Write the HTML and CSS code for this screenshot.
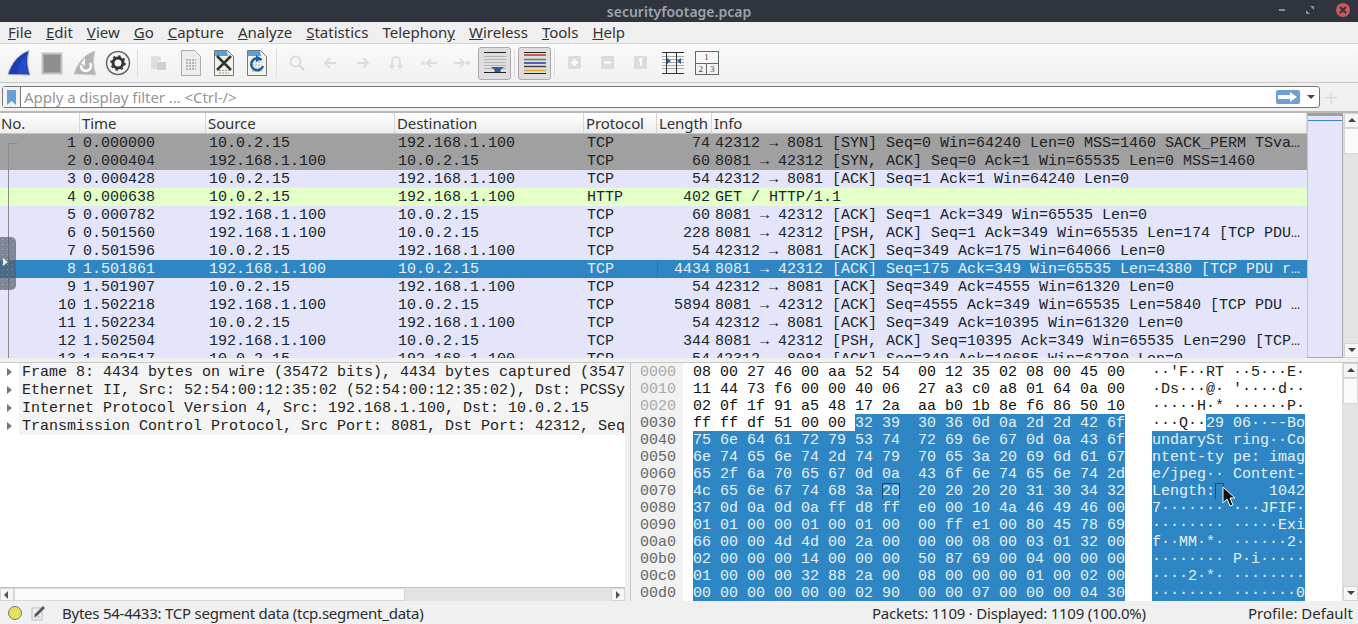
FILE: index.html
```html
<!DOCTYPE html>
<html lang="en">

<head>
    <meta charset="UTF-8">
    <title>securityfootage.pcap</title>
    <link rel="stylesheet" href="styles.css">
</head>

<body>
    <div class="window">
        <div class="titlebar">
            <span class="title">securityfootage.pcap</span>
            <div class="win-buttons">
                <span class="win-min"></span>
                <svg class="win-max" width="10" height="10" viewBox="0 0 10 10"><path d="M5 1h4v4zM1 5l4 4H1z" fill="#8b8f98"/></svg>
                <svg class="win-close" width="16" height="16" viewBox="0 0 16 16"><circle cx="8" cy="8" r="7" fill="#cc575d"/><path d="M5 5l6 6M11 5l-6 6" stroke="#2f343f" stroke-width="2"/></svg>
            </div>
        </div>

        <div class="menubar">
            <span class="menu"><u>F</u>ile</span>
            <span class="menu"><u>E</u>dit</span>
            <span class="menu"><u>V</u>iew</span>
            <span class="menu"><u>G</u>o</span>
            <span class="menu"><u>C</u>apture</span>
            <span class="menu"><u>A</u>nalyze</span>
            <span class="menu"><u>S</u>tatistics</span>
            <span class="menu">Telephon<u>y</u></span>
            <span class="menu"><u>W</u>ireless</span>
            <span class="menu"><u>T</u>ools</span>
            <span class="menu"><u>H</u>elp</span>
        </div>

        <div class="toolbar">
            <span class="tool"><svg width="26" height="28" viewBox="0 0 26 28"><path d="M2 25.500C5 14 13 5 23 1.500c-2 7-2 16 1 24.500z" fill="#1c3db4" stroke="#a9b4c4"/><path d="M12 25c0-7 2-14 9-19-1 7-1 13 1 19z" fill="#2f55cf" opacity=".6"/></svg></span>
            <span class="tool"><svg width="24" height="24" viewBox="0 0 24 24"><rect x="2.500" y="2.500" width="19" height="20" fill="#8e8e8e" stroke="#c4c4c4" stroke-width="2"/></svg></span>
            <span class="tool"><svg width="26" height="28" viewBox="0 0 26 28"><path d="M2 25C5 14 13 5 23 2c-2 7-2 16 1 24z" fill="#b4b4b4" stroke="#d0d0d0"/><path d="M9 16a5 5 0 1 0 9-2" fill="none" stroke="#fff" stroke-width="2.500"/><path d="M13 9v8l-4-3z" fill="#fff"/></svg></span>
            <span class="tool"><svg width="26" height="26" viewBox="0 0 26 26"><circle cx="13" cy="13" r="11.500" fill="#f4f4f4" stroke="#666" stroke-width="1.500"/><circle cx="13" cy="13" r="5" fill="none" stroke="#333" stroke-width="3"/><circle cx="13" cy="13" r="7" fill="none" stroke="#333" stroke-width="1.500" stroke-dasharray="2.500 3"/></svg></span>
            <span class="tool-sep"></span>
            <span class="tool"><svg width="20" height="20" viewBox="0 0 20 20"><path d="M3 3h8l2 2v3H9v8H3z" fill="#dedede"/><rect x="9" y="9" width="9" height="8" fill="#d0d0d0"/></svg></span>
            <span class="tool"><svg width="22" height="28" viewBox="0 0 22 28"><path d="M1.500 1.500h13l6 6v19h-19z" fill="#ececec" stroke="#aaa"/><path d="M6 11h10M6 14h10M6 17h10M6 20h10" stroke="#a0a0a0" stroke-width="1.500" stroke-dasharray="2 1"/></svg></span>
            <span class="tool"><svg width="22" height="28" viewBox="0 0 22 28"><path d="M1.500 1.500h13l6 6v19h-19z" fill="#f3f3e8" stroke="#777"/><path d="M2 2h12l1 5H2z" fill="#54a4dc"/><path d="M6 21.500h10M6 24h10" stroke="#999" stroke-dasharray="2 1"/><path d="M4 7l14 14M18 7L4 21" stroke="#333" stroke-width="2.500"/></svg></span>
            <span class="tool"><svg width="22" height="28" viewBox="0 0 22 28"><path d="M1.500 1.500h13l6 6v19h-19z" fill="#f3f3e8" stroke="#777"/><path d="M2 2h12l1 5H2z" fill="#54a4dc"/><path d="M6 13h10M6 16h10M6 19h10M6 22h10" stroke="#aaa" stroke-dasharray="2 1"/><path d="M15.500 11a6 6 0 1 0 1.500 6" fill="none" stroke="#1f5fa8" stroke-width="2.500"/><path d="M10 6l6 4-6 3z" fill="#1f5fa8"/></svg></span>
            <span class="tool-sep"></span>
            <span class="tool"><svg width="18" height="18" viewBox="0 0 18 18"><circle cx="7.500" cy="7.500" r="5" fill="none" stroke="#dcdcdc" stroke-width="2"/><path d="M11 11l5 5" stroke="#dcdcdc" stroke-width="2.500"/></svg></span>
            <span class="tool"><svg width="16" height="14" viewBox="0 0 16 14"><path d="M14 7H3M8 2L3 7l5 5" fill="none" stroke="#dcdcdc" stroke-width="2"/></svg></span>
            <span class="tool"><svg width="16" height="14" viewBox="0 0 16 14"><path d="M2 7h11M8 2l5 5-5 5" fill="none" stroke="#dcdcdc" stroke-width="2"/></svg></span>
            <span class="tool"><svg width="14" height="16" viewBox="0 0 14 16"><path d="M3 13V6a4 4 0 0 1 8 0v7M1 10l2 3 2-3M9 10l2 3 2-3" fill="none" stroke="#dcdcdc" stroke-width="2"/></svg></span>
            <span class="tool"><svg width="18" height="14" viewBox="0 0 18 14"><path d="M17 7H7M11 3L7 7l4 4" fill="none" stroke="#dcdcdc" stroke-width="2"/><circle cx="3" cy="7" r="2" fill="#dcdcdc"/></svg></span>
            <span class="tool"><svg width="18" height="14" viewBox="0 0 18 14"><path d="M1 7h10M7 3l4 4-4 4" fill="none" stroke="#dcdcdc" stroke-width="2"/><circle cx="15" cy="7" r="2" fill="#dcdcdc"/></svg></span>
            <span class="tool tool-on"><svg width="25" height="25" viewBox="0 0 25 25"><path d="M2 1.500h22M2 21.500h22" stroke="#222"/><path d="M2 5.500h22M2 8.500h22M2 11.500h22M2 14.500h22M2 17.500h22" stroke="#b4b4b4"/><path d="M9 16h13l-3.500 3v2h-6v-2z" fill="#2d5f9e"/></svg></span>
            <span class="tool-sep"></span>
            <span class="tool tool-on"><svg width="25" height="25" viewBox="0 0 25 25"><path d="M2 1.500h22" stroke="#222"/><path d="M2 4h22" stroke="#d02a2a" stroke-width="1.500"/><path d="M2 8.500h22" stroke="#2f9a3a" stroke-width="1.500"/><path d="M2 12h22" stroke="#3333b8" stroke-width="1.500"/><path d="M2 15.500h22" stroke="#444" stroke-width="1.500"/><path d="M2 19.500h22" stroke="#e0aa20" stroke-width="1.500"/><path d="M2 22.500h22" stroke="#222"/></svg></span>
            <span class="tool-sep"></span>
            <span class="tool"><svg width="14" height="14" viewBox="0 0 14 14"><rect width="13" height="13" rx="1" fill="#dcdcdc"/><path d="M6.500 3v7M3 6.500h7" stroke="#fff" stroke-width="2"/></svg></span>
            <span class="tool"><svg width="14" height="14" viewBox="0 0 14 14"><rect width="13" height="13" rx="1" fill="#dcdcdc"/><path d="M3 6.500h7" stroke="#fff" stroke-width="2"/></svg></span>
            <span class="tool"><svg width="14" height="14" viewBox="0 0 14 14"><rect width="13" height="13" rx="1" fill="#dcdcdc"/><path d="M5 4l2-1v7" fill="none" stroke="#fff" stroke-width="2"/></svg></span>
            <span class="tool"><svg width="24" height="24" viewBox="0 0 24 24"><path d="M0 1.500h22M0 22.500h22" stroke="#333"/><path d="M0 5.500h22M0 8.500h22M0 11.500h22M0 14.500h22M0 17.500h22" stroke="#aaa"/><path d="M4.500 2v20M14.500 2v20" stroke="#333"/><path d="M5 7l4 3-4 3zM19 7l-4 3 4 3z" fill="#2d5f9e"/></svg></span>
            <span class="tool"><span class="layout-icon"><span class="layout-top">1</span><span class="layout-bot"><span>2</span><span>3</span></span></span></span>
        </div>

        <div class="filterbar">
            <div class="filter">
                <span class="filter-mark"><svg width="9" height="15" viewBox="0 0 9 15"><path d="M0 0h9v15L4.500 11 0 15z" fill="#6a9ed8"/></svg></span>
                <span class="filter-hint">Apply a display filter … &lt;Ctrl-/&gt;</span>
                <span class="filter-go"><svg width="20" height="10" viewBox="0 0 20 10"><path d="M0 3h12V0l7 5-7 5V7H0z" fill="#fff"/></svg></span>
                <span class="filter-caret"></span>
            </div>
            <span class="filter-plus">+</span>
        </div>

        <div class="packet-pane">
            <div class="packet-main">
                <div class="packet-head">
                    <span>No.</span>
                    <span>Time</span>
                    <span>Source</span>
                    <span>Destination</span>
                    <span>Protocol</span>
                    <span>Length</span>
                    <span>Info</span>
                </div>
                <div class="packet-rows">
                    <div class="row gray"><span>1</span><span>0.000000</span><span>10.0.2.15</span><span>192.168.1.100</span><span>TCP</span><span>74</span><span>42312 → 8081 [SYN] Seq=0 Win=64240 Len=0 MSS=1460 SACK_PERM TSva…</span></div>
                    <div class="row gray"><span>2</span><span>0.000404</span><span>192.168.1.100</span><span>10.0.2.15</span><span>TCP</span><span>60</span><span>8081 → 42312 [SYN, ACK] Seq=0 Ack=1 Win=65535 Len=0 MSS=1460</span></div>
                    <div class="row"><span>3</span><span>0.000428</span><span>10.0.2.15</span><span>192.168.1.100</span><span>TCP</span><span>54</span><span>42312 → 8081 [ACK] Seq=1 Ack=1 Win=64240 Len=0</span></div>
                    <div class="row http"><span>4</span><span>0.000638</span><span>10.0.2.15</span><span>192.168.1.100</span><span>HTTP</span><span>402</span><span>GET / HTTP/1.1</span></div>
                    <div class="row"><span>5</span><span>0.000782</span><span>192.168.1.100</span><span>10.0.2.15</span><span>TCP</span><span>60</span><span>8081 → 42312 [ACK] Seq=1 Ack=349 Win=65535 Len=0</span></div>
                    <div class="row"><span>6</span><span>0.501560</span><span>192.168.1.100</span><span>10.0.2.15</span><span>TCP</span><span>228</span><span>8081 → 42312 [PSH, ACK] Seq=1 Ack=349 Win=65535 Len=174 [TCP PDU…</span></div>
                    <div class="row"><span>7</span><span>0.501596</span><span>10.0.2.15</span><span>192.168.1.100</span><span>TCP</span><span>54</span><span>42312 → 8081 [ACK] Seq=349 Ack=175 Win=64066 Len=0</span></div>
                    <div class="row selected"><span>8</span><span>1.501861</span><span>192.168.1.100</span><span>10.0.2.15</span><span>TCP</span><span class="len-mark">4434</span><span>8081 → 42312 [ACK] Seq=175 Ack=349 Win=65535 Len=4380 [TCP PDU r…</span></div>
                    <div class="row"><span>9</span><span>1.501907</span><span>10.0.2.15</span><span>192.168.1.100</span><span>TCP</span><span>54</span><span>42312 → 8081 [ACK] Seq=349 Ack=4555 Win=61320 Len=0</span></div>
                    <div class="row"><span>10</span><span>1.502218</span><span>192.168.1.100</span><span>10.0.2.15</span><span>TCP</span><span>5894</span><span>8081 → 42312 [ACK] Seq=4555 Ack=349 Win=65535 Len=5840 [TCP PDU …</span></div>
                    <div class="row"><span>11</span><span>1.502234</span><span>10.0.2.15</span><span>192.168.1.100</span><span>TCP</span><span>54</span><span>42312 → 8081 [ACK] Seq=349 Ack=10395 Win=61320 Len=0</span></div>
                    <div class="row"><span>12</span><span>1.502504</span><span>192.168.1.100</span><span>10.0.2.15</span><span>TCP</span><span>344</span><span>8081 → 42312 [PSH, ACK] Seq=10395 Ack=349 Win=65535 Len=290 [TCP…</span></div>
                    <div class="row"><span>13</span><span>1.502517</span><span>10.0.2.15</span><span>192.168.1.100</span><span>TCP</span><span>54</span><span>42312 → 8081 [ACK] Seq=349 Ack=10685 Win=62780 Len=0</span></div>
                    <span class="tree-line"></span>
                </div>
            </div>
            <div class="minimap"><span class="minimap-now"></span></div>
            <div class="vscroll">
                <span class="sb-btn up"></span>
                <span class="sb-thumb list-thumb"></span>
                <span class="sb-track"></span>
                <span class="sb-btn down"></span>
            </div>
        </div>

        <div class="bottom">
            <div class="details">
                <div class="details-tree">
                    <div class="node">Frame 8: 4434 bytes on wire (35472 bits), 4434 bytes captured (3547</div>
                    <div class="node">Ethernet II, Src: 52:54:00:12:35:02 (52:54:00:12:35:02), Dst: PCSSy</div>
                    <div class="node">Internet Protocol Version 4, Src: 192.168.1.100, Dst: 10.0.2.15</div>
                    <div class="node">Transmission Control Protocol, Src Port: 8081, Dst Port: 42312, Seq</div>
                </div>
                <div class="hscroll">
                    <span class="sb-btn left"></span>
                    <span class="sb-thumb h-thumb"></span>
                    <span class="sb-track"></span>
                    <span class="sb-btn right"></span>
                </div>
            </div>
            <div class="split-v"></div>
            <div class="hex">
                <div class="hex-rows">
                    <div class="hex-row"><span class="off dim">0000</span><span class="bytes">08 00 27 46 00 aa 52 54  00 12 35 02 08 00 45 00</span><span class="ascii">··'F··RT ··5···E·</span></div>
                    <div class="hex-row"><span class="off dim">0010</span><span class="bytes">11 44 73 f6 00 00 40 06  27 a3 c0 a8 01 64 0a 00</span><span class="ascii">·Ds···@· '····d··</span></div>
                    <div class="hex-row"><span class="off dim">0020</span><span class="bytes">02 0f 1f 91 a5 48 17 2a  aa b0 1b 8e f6 86 50 10</span><span class="ascii">·····H·* ······P·</span></div>
                    <div class="hex-row"><span class="off">0030</span><span class="bytes">ff ff df 51 00 00 <b>32 39  30 36 0d 0a 2d 2d 42 6f</b></span><span class="ascii">···Q··<b>29 06··--Bo</b></span></div>
                    <div class="hex-row"><span class="off">0040</span><span class="bytes"><b>75 6e 64 61 72 79 53 74  72 69 6e 67 0d 0a 43 6f</b></span><span class="ascii"><b>undarySt ring··Co</b></span></div>
                    <div class="hex-row"><span class="off">0050</span><span class="bytes"><b>6e 74 65 6e 74 2d 74 79  70 65 3a 20 69 6d 61 67</b></span><span class="ascii"><b>ntent-ty pe: imag</b></span></div>
                    <div class="hex-row"><span class="off">0060</span><span class="bytes"><b>65 2f 6a 70 65 67 0d 0a  43 6f 6e 74 65 6e 74 2d</b></span><span class="ascii"><b>e/jpeg·· Content-</b></span></div>
                    <div class="hex-row"><span class="off">0070</span><span class="bytes"><b>4c 65 6e 67 74 68 3a <i>20</i>  20 20 20 20 31 30 34 32</b></span><span class="ascii"><b>Length:<i> </i>     1042</b></span></div>
                    <div class="hex-row"><span class="off">0080</span><span class="bytes"><b>37 0d 0a 0d 0a ff d8 ff  e0 00 10 4a 46 49 46 00</b></span><span class="ascii"><b>7······· ···JFIF·</b></span></div>
                    <div class="hex-row"><span class="off">0090</span><span class="bytes"><b>01 01 00 00 01 00 01 00  00 ff e1 00 80 45 78 69</b></span><span class="ascii"><b>········ ·····Exi</b></span></div>
                    <div class="hex-row"><span class="off">00a0</span><span class="bytes"><b>66 00 00 4d 4d 00 2a 00  00 00 08 00 03 01 32 00</b></span><span class="ascii"><b>f··MM·*· ······2·</b></span></div>
                    <div class="hex-row"><span class="off">00b0</span><span class="bytes"><b>02 00 00 00 14 00 00 00  50 87 69 00 04 00 00 00</b></span><span class="ascii"><b>········ P·i·····</b></span></div>
                    <div class="hex-row"><span class="off">00c0</span><span class="bytes"><b>01 00 00 00 32 88 2a 00  08 00 00 00 01 00 02 00</b></span><span class="ascii"><b>····2·*· ········</b></span></div>
                    <div class="hex-row"><span class="off">00d0</span><span class="bytes"><b>00 00 00 00 00 00 02 90  00 00 07 00 00 00 04 30</b></span><span class="ascii"><b>········ ·······0</b></span></div>
                </div>
                <div class="vscroll">
                    <span class="sb-btn up"></span>
                    <span class="sb-thumb hex-thumb"></span>
                    <span class="sb-track"></span>
                    <span class="sb-btn down"></span>
                </div>
            </div>
        </div>

        <div class="status">
            <span class="led"></span>
            <svg class="note" width="16" height="16" viewBox="0 0 16 16"><path d="M2 3h10v12H2z" fill="#eee" stroke="#bbb"/><path d="M4 9h5M4 12h6" stroke="#bbb"/><path d="M5 9l8-8 2 2-8 8-3 1z" fill="#556"/></svg>
            <span class="status-text">Bytes 54-4433: TCP segment data (tcp.segment_data)</span>
            <span class="status-packets">Packets: 1109 · Displayed: 1109 (100.0%)</span>
            <span class="status-profile">Profile: Default</span>
        </div>

        <!-- things floating over the panes -->
        <div class="handle"><span class="handle-arrow"></span></div>
        <svg class="cursor" width="14" height="22" viewBox="0 0 14 22"><path d="M1 1v16l4-4 3 7 3-1-3-7h5z" fill="#111" stroke="#fff"/></svg>
    </div>
</body>

</html>
```

FILE: styles.css
```css
* {
    box-sizing: border-box;
}

body {
    margin: 0;
    overflow: hidden;
    font-family: "Noto Sans", sans-serif;
    font-size: 15px;
    color: #2c2c2c;
}

.window {
    position: relative;
    width: 1358px;
    height: 624px;
    display: flex;
    flex-direction: column;
    overflow: hidden;
    background: #f0f0f0;
}

/* title bar */
.titlebar {
    height: 22px;
    flex: none;
    display: flex;
    align-items: center;
    justify-content: center;
    background: #2f343f;
    position: relative;
}

.title {
    color: #9ea3ad;
    font-size: 14px;
    font-weight: 600;
}

.win-buttons {
    position: absolute;
    right: 7px;
    top: 2px;
    display: flex;
    align-items: center;
    gap: 20px;
}

.win-min {
    width: 6px;
    height: 2px;
    background: #8b8f98;
}

/* menu */
.menubar {
    height: 22px;
    flex: none;
    display: flex;
    align-items: center;
    gap: 14px;
    padding: 0 0 2px 8px;
    background: #efefef;
    border-bottom: 1px solid #d4d4d4;
}

.menu {
    color: #333;
}

/* toolbar */
.toolbar {
    height: 39px;
    flex: none;
    display: flex;
    align-items: center;
    padding-left: 2px;
    background: linear-gradient(#fafafa, #f0f0f0);
    border-bottom: 1px solid #c9c9c9;
}

.tool {
    width: 33px;
    height: 33px;
    flex: none;
    display: flex;
    align-items: center;
    justify-content: center;
}

.tool-on {
    background: #dedede;
    border: 1px solid #aaa;
    border-radius: 3px;
}

.tool-sep {
    width: 1px;
    height: 28px;
    margin: 0 3px;
    background: #dcdcdc;
}

.layout-icon {
    width: 24px;
    height: 24px;
    display: flex;
    flex-direction: column;
    border: 1px solid #666;
    font-family: "Liberation Serif", serif;
    font-size: 9px;
    line-height: 11px;
    text-align: center;
    color: #444;
}

.layout-top {
    flex: 1;
    border-bottom: 1px solid #666;
}

.layout-bot {
    flex: 1;
    display: flex;
}

.layout-bot span {
    flex: 1;
}

.layout-bot span:first-child {
    border-right: 1px solid #666;
}

/* display filter */
.filterbar {
    height: 28px;
    flex: none;
    display: flex;
    align-items: center;
    padding-left: 2px;
    background: #f0f0f0;
}

.filter {
    width: 1318px;
    height: 22px;
    display: flex;
    align-items: center;
    background: #fff;
    border: 1px solid #777;
    border-radius: 3px;
}

.filter-mark {
    width: 18px;
    height: 20px;
    flex: none;
    display: flex;
    align-items: center;
    justify-content: center;
    background: #f2f2f2;
    border-right: 1px solid #777;
}

.filter-hint {
    flex: 1;
    padding-left: 3px;
    letter-spacing: -0.05px;
    color: #969696;
}

.filter-go {
    width: 24px;
    height: 14px;
    display: flex;
    align-items: center;
    justify-content: center;
    background: #6f9fd4;
    border-radius: 2px;
}

.filter-caret {
    width: 0;
    height: 0;
    margin: 0 4px 0 7px;
    border: 4px solid transparent;
    border-top: 4px solid #444;
    border-bottom: 0;
}

.filter-plus {
    margin-left: 4px;
    font-size: 25px;
    font-weight: 300;
    line-height: 20px;
    color: #d6d6d6;
}

/* packet list */
.packet-pane {
    height: 247px;
    flex: none;
    display: flex;
    border-top: 2px solid #b8b8b8;
}

.packet-main {
    width: 1307px;
    flex: none;
    display: flex;
    flex-direction: column;
    background: #fff;
}

.packet-head {
    height: 21px;
    flex: none;
    display: grid;
    grid-template-columns: 80px 126px 189px 189px 73px 55px 1fr;
    background: linear-gradient(#fff, #ececec);
    border-bottom: 1px solid #c4c4c4;
}

.packet-head span {
    padding-left: 2px;
    border-right: 1px solid #d6d6d6;
    line-height: 20px;
    letter-spacing: -0.1px;
    color: #333;
}

.packet-head span:first-child {
    padding-left: 1px;
}

.packet-rows {
    flex: 1;
    position: relative;
    overflow: hidden;
    font-family: "Liberation Mono", monospace;
    font-size: 15px;
}

.row {
    height: 18px;
    display: grid;
    grid-template-columns: 81px 126px 189px 189px 72px 56px 1fr;
    white-space: pre;
    background: #e4e4fa;
    color: #14272e;
}

.row span {
    padding: 1px 2px 0;
    line-height: 17px;
    overflow: hidden;
}

.row span:first-child {
    padding-right: 5px;
    text-align: right;
}

.row span:nth-child(6) {
    padding-right: 3px;
    text-align: right;
}

.gray {
    background: #a0a0a0;
    color: #1c2226;
}

.http {
    background: #e4ffc7;
}

.selected {
    background: #2e86c4;
    color: #e6f1f8;
}

.len-mark {
    border-left: 1px solid #2a77ad;
}

.tree-line {
    position: absolute;
    left: 8px;
    top: 9px;
    width: 9px;
    height: 220px;
    border-left: 1px solid #8a8a90;
    border-top: 1px solid #8a8a90;
}

.minimap {
    width: 36px;
    flex: none;
    position: relative;
    background: #e4e4fa;
    border-left: 1px solid #c4c4c4;
    border-right: 1px solid #aaa;
    border-bottom: 1px solid #aaa;
    border-top: 3px solid #a0a0a0;
}

.minimap-now {
    position: absolute;
    left: 0;
    right: 0;
    top: 4px;
    height: 1px;
    background: #3f84c9;
}

/* scroll bars */
.vscroll {
    width: 16px;
    flex: none;
    display: flex;
    flex-direction: column;
    background: #e3e3e3;
    border-left: 1px solid #ddd;
}

.hscroll {
    height: 14px;
    flex: none;
    display: flex;
    background: #e3e3e3;
    border-top: 1px solid #c4c4c4;
}

.sb-btn {
    width: 15px;
    height: 15px;
    flex: none;
    position: relative;
    background: #f6f6f6;
    border: 1px solid #d4d4d4;
}

.hscroll .sb-btn {
    width: 14px;
    height: 13px;
}

.sb-btn::after {
    content: "";
    position: absolute;
    left: 3px;
    top: 4px;
    border: 4px solid transparent;
    border-top-width: 0;
    border-bottom-color: #444;
}

.sb-btn.down::after {
    border-bottom-width: 0;
    border-top: 4px solid #444;
}

.sb-btn.left::after {
    left: 3px;
    top: 2px;
    border-left-width: 0;
    border-top-width: 4px;
    border-bottom: 4px solid transparent;
    border-right: 4px solid #555;
}

.sb-btn.right::after {
    left: 4px;
    top: 2px;
    border-right-width: 0;
    border-top-width: 4px;
    border-bottom: 4px solid transparent;
    border-left: 4px solid #555;
}

.sb-thumb {
    flex: none;
    background: #fafafa;
    border: 1px solid #d8d8d8;
}

.list-thumb {
    height: 26px;
}

.hex-thumb {
    height: 26px;
}

.h-thumb {
    width: 391px;
}

.sb-track {
    flex: 1;
}

/* lower panes */
.bottom {
    height: 239px;
    flex: none;
    display: flex;
    margin-top: 4px;
    background: #fff;
    border-top: 1px solid #c8c8c8;
}

.details {
    width: 625px;
    flex: none;
    display: flex;
    flex-direction: column;
    overflow: hidden;
}

.details-tree {
    flex: 1;
    overflow: hidden;
    font-family: "Liberation Mono", monospace;
    font-size: 15px;
    background: #fff;
}

.node {
    height: 18px;
    position: relative;
    padding: 1px 0 0 22px;
    line-height: 17px;
    white-space: pre;
    color: #222;
    background: linear-gradient(90deg, #fff 19px, #f4f4f4 19px);
}

.node::before {
    content: "";
    position: absolute;
    left: 7px;
    top: 5px;
    border: 4px solid transparent;
    border-right-width: 0;
    border-left: 5px solid #777;
}

.split-v {
    width: 5px;
    flex: none;
    background: #f0f0f0;
}

.hex {
    flex: 1;
    display: flex;
    border-left: 1px solid #c8c8c8;
    min-width: 0;
}

.hex-rows {
    flex: 1;
    overflow: hidden;
    padding-top: 1px;
    font-family: "Liberation Mono", monospace;
    font-size: 15px;
    background: linear-gradient(90deg, #f1f1f1 52px, #fff 52px);
}

.hex-row {
    height: 17px;
    display: flex;
    line-height: 17px;
    white-space: pre;
    color: #111;
}

.off {
    width: 62px;
    flex: none;
    padding-left: 9px;
    color: #666;
}

.dim {
    color: #aaa;
}

.bytes {
    width: 459px;
    flex: none;
}

.ascii {
    flex: none;
    color: #222;
}

.hex-row b {
    padding-top: 1px;
    font-weight: normal;
    background: #2e86c4;
    color: #e6f1f8;
}

.hex-row i {
    font-style: normal;
    outline: 1px solid #1d4f74;
    outline-offset: -1px;
}

/* status bar */
.status {
    flex: 1;
    display: flex;
    align-items: center;
    background: #f0f0f0;
}

.led {
    width: 14px;
    height: 14px;
    margin-left: 8px;
    border-radius: 50%;
    background: #e6e05c;
    border: 1px solid #777;
}

.note {
    margin-left: 8px;
}

.status-text {
    margin-left: 16px;
    width: 810px;
    letter-spacing: -0.24px;
}

.status-packets {
    width: 376px;
    letter-spacing: -0.22px;
}

/* floating over the panes */
.handle {
    position: absolute;
    left: 0;
    top: 237px;
    width: 16px;
    height: 53px;
    background: rgba(84, 96, 108, 0.7) radial-gradient(circle, rgba(255, 255, 255, 0.3) 0.8px, transparent 1px);
    background-size: 5px 5px;
    border-radius: 0 5px 5px 0;
}

.handle-arrow {
    position: absolute;
    left: 3px;
    top: 21px;
    border: 4px solid transparent;
    border-right-width: 0;
    border-left: 5px solid #e8f0f6;
}

.cursor {
    position: absolute;
    left: 1222px;
    top: 486px;
}
```
